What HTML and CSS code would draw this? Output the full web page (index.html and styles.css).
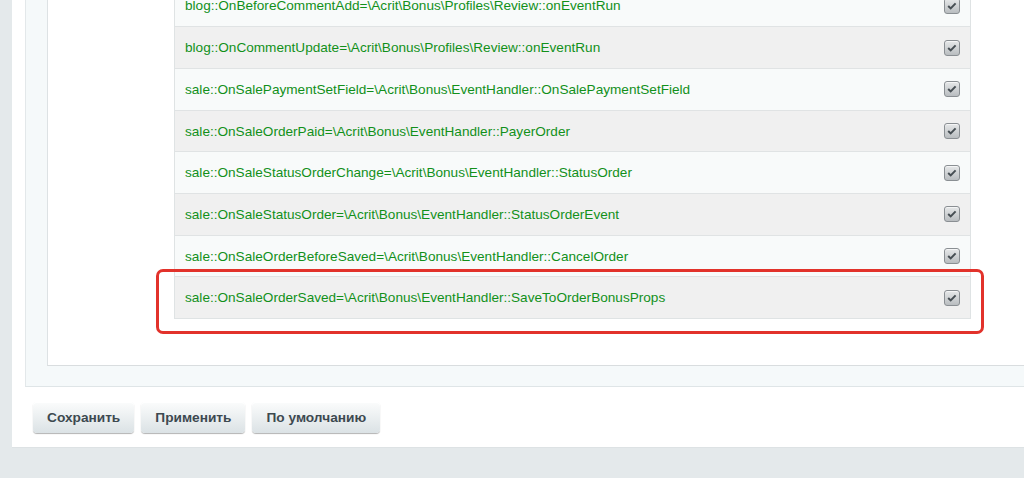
FILE: index.html
```html
<!DOCTYPE html>
<html lang="ru">
<head>
<meta charset="utf-8">
<link rel="stylesheet" href="styles.css">
</head>
<body>
<div class="panel">
  <div class="edit-area">
    <div class="inner">
      <div class="table">
        <div class="row odd"><span class="txt">blog::OnBeforeCommentAdd=\Acrit\Bonus\Profiles\Review::onEventRun</span><span class="cb"><svg viewBox="0 0 16 16" width="16" height="16"><path d="M4.2 8 L6.7 10.4 L11.6 5.4" fill="none" stroke="#464e53" stroke-width="2"/></svg></span></div>
        <div class="row even"><span class="txt">blog::OnCommentUpdate=\Acrit\Bonus\Profiles\Review::onEventRun</span><span class="cb"><svg viewBox="0 0 16 16" width="16" height="16"><path d="M4.2 8 L6.7 10.4 L11.6 5.4" fill="none" stroke="#464e53" stroke-width="2"/></svg></span></div>
        <div class="row odd"><span class="txt">sale::OnSalePaymentSetField=\Acrit\Bonus\EventHandler::OnSalePaymentSetField</span><span class="cb"><svg viewBox="0 0 16 16" width="16" height="16"><path d="M4.2 8 L6.7 10.4 L11.6 5.4" fill="none" stroke="#464e53" stroke-width="2"/></svg></span></div>
        <div class="row even"><span class="txt">sale::OnSaleOrderPaid=\Acrit\Bonus\EventHandler::PayerOrder</span><span class="cb"><svg viewBox="0 0 16 16" width="16" height="16"><path d="M4.2 8 L6.7 10.4 L11.6 5.4" fill="none" stroke="#464e53" stroke-width="2"/></svg></span></div>
        <div class="row odd"><span class="txt">sale::OnSaleStatusOrderChange=\Acrit\Bonus\EventHandler::StatusOrder</span><span class="cb"><svg viewBox="0 0 16 16" width="16" height="16"><path d="M4.2 8 L6.7 10.4 L11.6 5.4" fill="none" stroke="#464e53" stroke-width="2"/></svg></span></div>
        <div class="row even"><span class="txt">sale::OnSaleStatusOrder=\Acrit\Bonus\EventHandler::StatusOrderEvent</span><span class="cb"><svg viewBox="0 0 16 16" width="16" height="16"><path d="M4.2 8 L6.7 10.4 L11.6 5.4" fill="none" stroke="#464e53" stroke-width="2"/></svg></span></div>
        <div class="row odd"><span class="txt">sale::OnSaleOrderBeforeSaved=\Acrit\Bonus\EventHandler::CancelOrder</span><span class="cb"><svg viewBox="0 0 16 16" width="16" height="16"><path d="M4.2 8 L6.7 10.4 L11.6 5.4" fill="none" stroke="#464e53" stroke-width="2"/></svg></span></div>
        <div class="row even last"><span class="txt">sale::OnSaleOrderSaved=\Acrit\Bonus\EventHandler::SaveToOrderBonusProps</span><span class="cb"><svg viewBox="0 0 16 16" width="16" height="16"><path d="M4.2 8 L6.7 10.4 L11.6 5.4" fill="none" stroke="#464e53" stroke-width="2"/></svg></span><span class="highlight"></span></div>
      </div>
    </div>
  </div>
  <div class="buttons">
    <button class="btn">Сохранить</button>
    <button class="btn">Применить</button>
    <button class="btn">По умолчанию</button>
  </div>
</div>
</body>
</html>
```
FILE: styles.css
```css
html, body {
  margin: 0;
  padding: 0;
  height: 478px;
  overflow: hidden;
  background: #e4e9eb;
  font-family: "Liberation Sans", Arial, sans-serif;
}
.panel {
  margin-left: 12px;
  background: #fff;
  padding: 0 0 14px 13px;
  border-bottom: 1px solid #dde2e4;
}
.edit-area {
  background: #f5f9fa;
  border-left: 1px solid #e3e8ea;
  border-bottom: 1px solid #dfe5e7;
  padding: 0 0 20px 21px;
}
.inner {
  background: #fff;
  border-left: 1px solid #dde2e4;
  border-bottom: 1px solid #d9dddf;
  padding: 0 0 46px 126px;
}
.table {
  width: 795px;
  border: 1px solid #dfe3e4;
  border-top: 0;
  margin-top: -15.4px;
}
.row {
  position: relative;
  display: flex;
  align-items: center;
  justify-content: space-between;
  height: 40.7px;
  border-top: 1px solid #e0e3e4;
  padding: 0 10px 0 10px;
}
.row.odd { background: #f8fafa; }
.row.even { background: #f0f0f0; }
.txt {
  font-size: 13.6px;
  color: #12901a;
}
.cb {
  width: 16px;
  height: 16px;
  box-sizing: border-box;
  border: 1px solid #8a8f93;
  border-radius: 3px;
  background: linear-gradient(#e6e8e9, #b9bdc0);
  box-shadow: inset 0 1px 0 rgba(255,255,255,.6);
  display: flex;
  align-items: center;
  justify-content: center;
}
.cb svg { display: block; margin: -1px; }
.highlight {
  position: absolute;
  top: -8px;
  left: -19px;
  right: -14px;
  bottom: -16px;
  border: 3px solid #e2322b;
  border-radius: 7px;
  pointer-events: none;
}
.buttons {
  display: flex;
  gap: 7px;
  padding: 15px 0 0 8px;
}
.btn {
  height: 31px;
  padding: 0 14px;
  border: 0;
  border-radius: 4px;
  background: linear-gradient(#fbfcfc, #dbe2e5);
  box-shadow: 0 1px 1px rgba(0,0,0,.3), inset 0 1px 0 #fff;
  font-family: "Liberation Sans", Arial, sans-serif;
  font-weight: bold;
  font-size: 13.7px;
  color: #3d4950;
}
```
